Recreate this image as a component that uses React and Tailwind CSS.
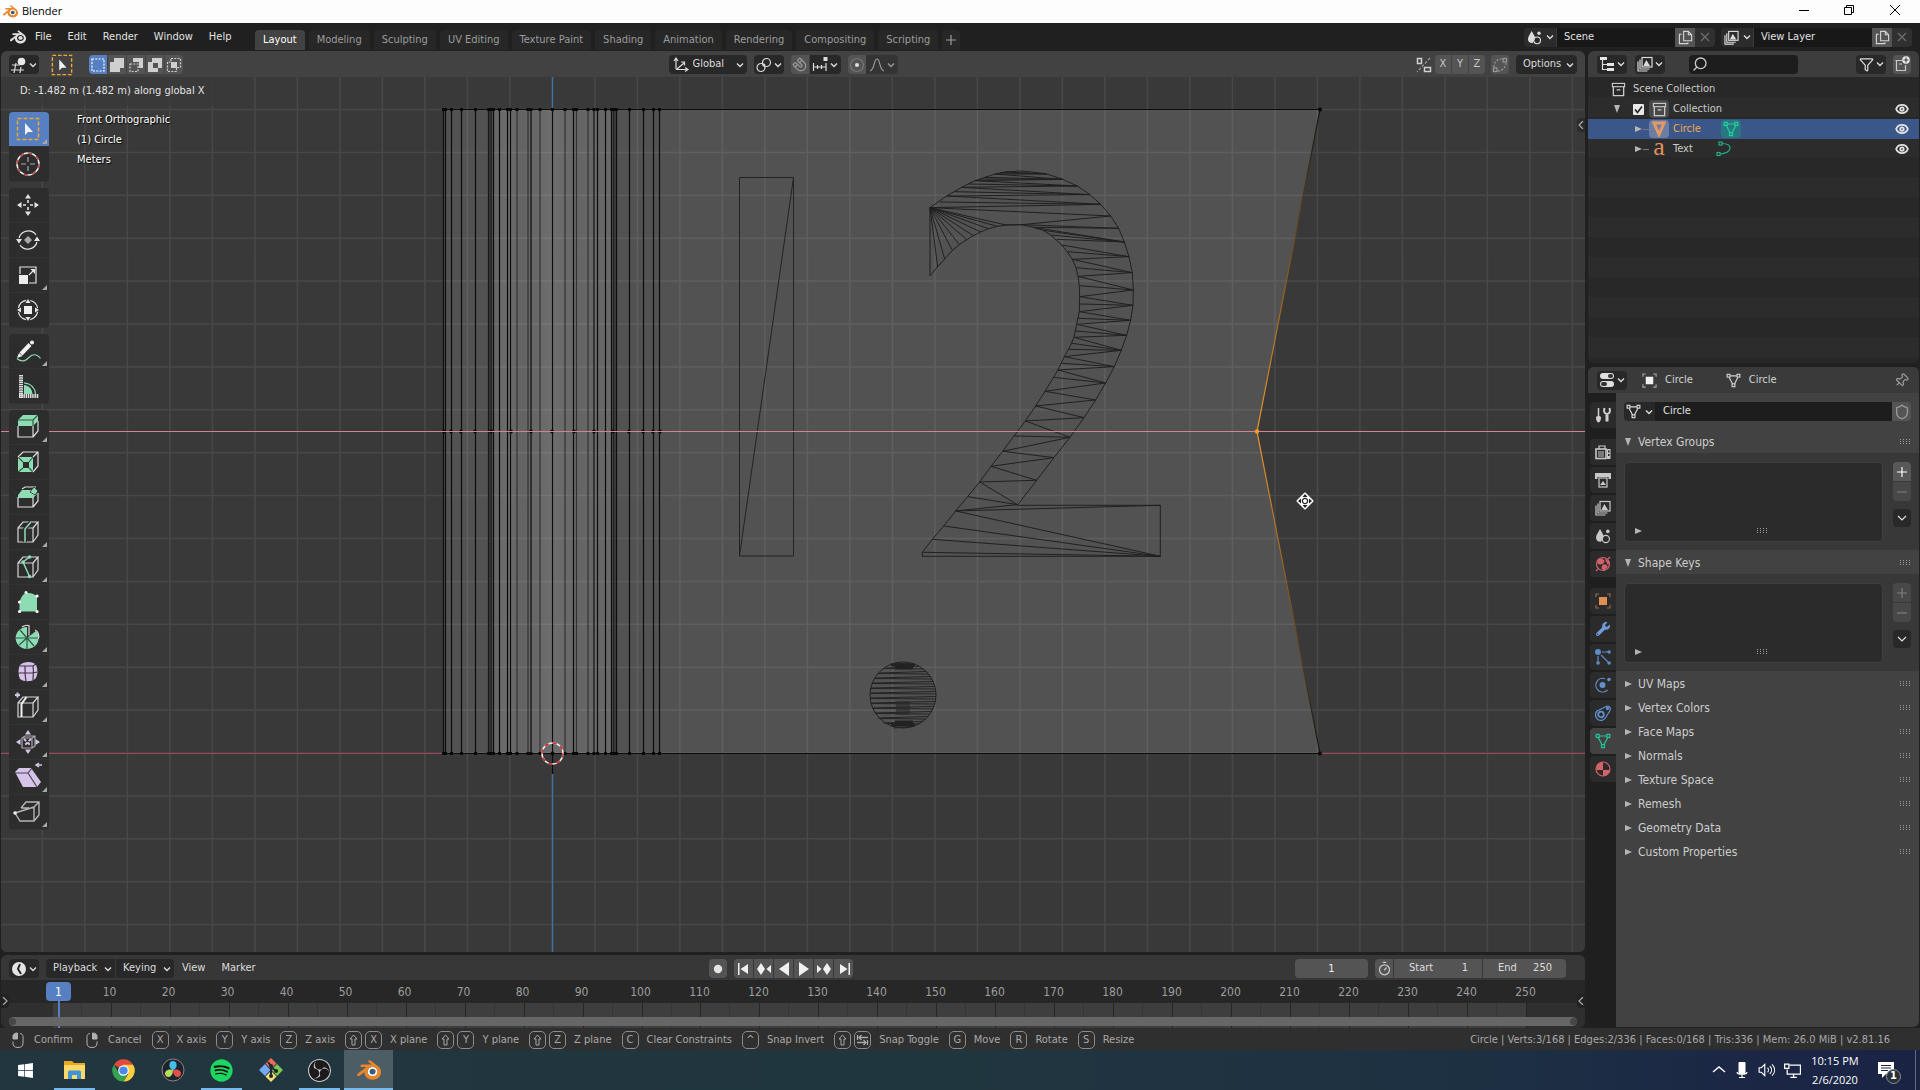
import React, { useState } from 'react';
import clsx from 'clsx';
import { Search, Pin, Shield, Funnel, Eye, Magnet, Timer } from 'lucide-react';
import { FaWrench, FaSpotify, FaWindows } from 'react-icons/fa';
import { SiBlender, SiObsstudio } from 'react-icons/si';

/* ---------- icons ---------- */

const Ico = ({ size = 16, box = 16, className, children }) => (
  <svg
    width={size}
    height={size}
    viewBox={`0 0 ${box} ${box}`}
    fill="none"
    stroke="currentColor"
    strokeWidth="1.2"
    className={clsx('shrink-0', className)}
    aria-hidden="true"
  >
    {children}
  </svg>
);

const Caret = ({ className }) => (
  <Ico size={8} box={8} className={className}>
    <path d="M1 2.5l3 3 3-3" strokeWidth="1.4" />
  </Ico>
);

const MeshIcon = (props) => (
  <Ico {...props}>
    <path d="M4.5 3h7M3.4 4.8l3.6 7M12.6 4.8l-3.6 7" />
    <rect x="1.2" y="1.4" width="3" height="3" />
    <rect x="11.8" y="1.4" width="3" height="3" />
    <rect x="6.5" y="11.6" width="3" height="3" />
  </Ico>
);

const ObjectIcon = (props) => (
  <Ico {...props}>
    <rect x="4" y="4" width="8" height="8" fill="currentColor" stroke="none" />
    <path d="M1 4V1h3M12 1h3v3M15 12v3h-3M4 15H1v-3" opacity="0.6" />
  </Ico>
);

const SceneIcon = (props) => (
  <Ico {...props}>
    <path d="M5 1c1.5 3 3.5 5 3.5 7.5 0 1-.3 1.6-.8 2.2L6 13.8C3 14 1 12.3 1 9.5 1 7 3.5 4 5 1z" fill="currentColor" stroke="none" />
    <circle cx="10.8" cy="11" r="3.6" />
    <circle cx="12.8" cy="3.4" r="1.8" fill="currentColor" stroke="none" />
  </Ico>
);

const LayersIcon = (props) => (
  <Ico {...props}>
    <path d="M1 5.5v9.5h9.5M3 3.5V13h9.5" />
    <rect x="5" y="1.5" width="10" height="9.5" />
    <path d="M6.3 10l3-6 3.8 6z" fill="currentColor" stroke="none" />
  </Ico>
);

const CollectionIcon = (props) => (
  <Ico {...props}>
    <rect x="1.5" y="1.5" width="13" height="3.5" />
    <path d="M2.5 5v9.500h11V5M6 8.300h4" strokeWidth="1.4" />
  </Ico>
);

const CopyIcon = (props) => (
  <Ico {...props}>
    <path d="M6 1.5h5l3.5 3.500v6.500H6zM11 1.500V5h3.500" />
    <path d="M4 4.500H1.500v10h9V13" />
  </Ico>
);

const SnapIncrement = () => (
  <Ico>
    <path d="M1.500 6v8M14 6v8M1.500 10h12.500M5.500 8v4M9.500 8v4" />
    <rect x="11.5" y="0" width="4" height="4" fill="currentColor" stroke="none" />
  </Ico>
);

const BlenderColor = ({ size }) => (
  <svg width={size} height={size} viewBox="0 0 24 24" aria-hidden="true">
    <circle cx="15.6" cy="14" r="5" fill="#fff" />
    <SiBlender size={24} color="#e8862a" />
    <circle cx="15.4" cy="13.7" r="2.7" fill="#255d96" />
  </svg>
);

/* ---------- toolbar icons, drawn on a 24 grid ---------- */

const MINT = '#8edcb4';
const LILAC = '#d5c3e8';

const Tool = ({ children }) => (
  <Ico size={24} box={24}>{children}</Ico>
);

const Cube = ({ color = '#d6d6d6' }) => (
  <path d="M2 8h15v14H2zM2 8l5-6h15l-5 6M22 2v13l-5 7" stroke={color} />
);

const SelectBox = ({ size = 24 }) => (
  <Ico size={size} box={24}>
    <rect x="1.5" y="1.5" width="21" height="21" stroke="#f0a733" strokeWidth="1.5" strokeDasharray="4 2" />
    <path d="M9 6v12l3-3h5z" fill="#f2f2f2" stroke="none" />
  </Ico>
);

const TOOL_GROUPS = [
  [
    { name: 'Select Box', more: true, icon: <SelectBox /> },
    {
      name: 'Cursor',
      icon: (
        <Tool>
          <circle cx="12" cy="12" r="11" stroke="#ededed" strokeWidth="1.5" />
          <circle cx="12" cy="12" r="11" stroke="#b5474a" strokeWidth="1.5" strokeDasharray="4.3 4.3" />
          <path d="M12 5v5M12 14v5M5 12h5M14 12h5" stroke="#aaa" />
        </Tool>
      ),
    },
  ],
  [
    {
      name: 'Move',
      icon: (
        <Tool>
          <path d="M12 7v3M12 14v3M7 12h3M14 12h3" strokeWidth="1.6" />
          <path d="M12 1l3 4.500H9zM12 23l3-4.500H9zM1 12l4.500-3v6zM23 12l-4.500-3v6z" fill="currentColor" stroke="none" />
        </Tool>
      ),
    },
    {
      name: 'Rotate',
      icon: (
        <Tool>
          <path d="M3 10A9.600 9.600 0 0 1 20 6.800M21 14A9.600 9.600 0 0 1 4 17.200" />
          <path d="M0 11h6l-3 4.500zM18 13h6l-3-4.500z" fill="currentColor" stroke="none" />
          <path d="M12 8l4 4-4 4-4-4z" fill="#aaa" stroke="none" />
        </Tool>
      ),
    },
    {
      name: 'Scale',
      more: true,
      icon: (
        <Tool>
          <path d="M4 11V4h16v16h-7M13 12l4-4" />
          <path d="M19 6v5l-4.500-5z" fill="currentColor" stroke="none" />
          <rect x="3" y="12" width="9" height="9" fill="#ececec" stroke="none" />
        </Tool>
      ),
    },
    {
      name: 'Transform',
      icon: (
        <Tool>
          <circle cx="12" cy="12" r="9.8" strokeDasharray="11 4.4" strokeDashoffset="-2" />
          <rect x="8" y="8" width="8" height="8" fill="#f0f0f0" stroke="none" />
          <path d="M12 1l2.500 4h-5zM12 23l2.500-4h-5zM1 12l4-2.500v5zM23 12l-4-2.500v5z" fill="currentColor" stroke="none" />
        </Tool>
      ),
    },
  ],
  [
    {
      name: 'Annotate',
      more: true,
      icon: (
        <Tool>
          <path d="M5 15L14 5.500" stroke="#f0f0f0" strokeWidth="4" />
          <path d="M1 19l2-5 3.500 3z" fill="#f0f0f0" stroke="none" />
          <circle cx="16" cy="3.500" r="2" fill="#f0f0f0" stroke="none" />
          <path d="M1 19.500c6 5 10 1 12.500-1.500s7-4 11 1.500" stroke={MINT} />
        </Tool>
      ),
    },
    {
      name: 'Measure',
      icon: (
        <Tool>
          <path d="M5 1v23M3 22h20" stroke="#ddd" strokeWidth="4" strokeDasharray="1.5 .7" />
          <path d="M8 9c7 .5 11 5 11.500 11" stroke={MINT} />
          <path d="M8 11c5 .5 8 4 8.500 9H8z" fill={MINT} stroke="none" />
        </Tool>
      ),
    },
  ],
  [
    {
      name: 'Extrude Region',
      more: true,
      icon: (
        <Tool>
          <path d="M2 5l5-5h15v6l-5 5H2z" fill={MINT} stroke="none" />
          <path d="M2 11v11h15V11M22 6v10l-5 6" stroke="#ddd" />
          <path d="M2 5h15l5-5M17 5v6" stroke="#2f5a45" />
        </Tool>
      ),
    },
    {
      name: 'Inset Faces',
      icon: (
        <Tool>
          <path d="M2 7h15v15H2z" fill={MINT} stroke="none" />
          <path d="M7 12h6v6H7z" fill="#2d2d2d" stroke="none" />
          <path d="M2 7l5 5M17 7l-4 5M2 22l5-4M17 22l-4-4" stroke="#2d5a44" />
          <path d="M2 7l5-5h15v14l-5 6M17 7l5-5" stroke="#ddd" />
        </Tool>
      ),
    },
    {
      name: 'Bevel',
      icon: (
        <Tool>
          <path d="M2 10l4-5h10l5 4-4 4H2z" fill={MINT} stroke="none" />
          <path d="M6 4l3-2h11M2 12v10h15V12M22 8v8l-5 6" stroke="#ddd" />
          <path d="M18 2l4 4-3 4-5-3z" fill={MINT} stroke="#2d2d2d" strokeWidth=".8" />
        </Tool>
      ),
    },
    {
      name: 'Loop Cut',
      more: true,
      icon: (
        <Tool>
          <Cube />
          <path d="M9 22V9l6-7" stroke="#2d2d2d" strokeWidth="4" />
          <path d="M9 22V9l6-7" stroke={MINT} strokeWidth="1.5" />
        </Tool>
      ),
    },
    {
      name: 'Knife',
      more: true,
      icon: (
        <Tool>
          <Cube />
          <path d="M13.500 21.500L7 7l6.500-5" stroke={MINT} strokeWidth="1.5" />
          <path d="M13.500 21.500h.1M7 7h.1M13.500 2h.1" stroke={MINT} strokeWidth="3.5" strokeLinecap="round" />
        </Tool>
      ),
    },
    {
      name: 'Poly Build',
      icon: (
        <Tool>
          <path d="M3.500 21.500V12C5 7 7 4 10 3c5-.5 9 1 11 4v14.500z" fill={MINT} stroke="none" />
          <path d="M3.500 21.500h.1M3.500 12h.1M10 2.500h.1M21 6h.1M21 21.500h.1" stroke="#f2f2f2" strokeWidth="3.2" strokeLinecap="round" />
        </Tool>
      ),
    },
    {
      name: 'Spin',
      more: true,
      icon: (
        <Tool>
          <path d="M11 13V2a11.500 11 0 1 0 9 4z" fill={MINT} stroke="none" />
          <path d="M6 2c2-1.500 5-2 7-1.500v10M19 5c3 1 5 6 3 9" stroke="#ddd" />
          <path d="M11 13H0M11 13h11M11 13v11M11 13L4 5M11 13l-8 7M11 13l7 8" stroke="#2d5a44" />
        </Tool>
      ),
    },
    {
      name: 'Smooth',
      more: true,
      icon: (
        <Tool>
          <path d="M4 5c4-4 13-4 16 0 2 4 2 11-1 14-4 3-11 3-15 0-2-4-2-10 0-14z" fill={LILAC} stroke="none" />
          <path d="M2 13h15l4-1M9 6c0 6 0 10 1 15M17 6c1 6 0 10 0 14M4 6h13l3-2" stroke="#3d3545" />
        </Tool>
      ),
    },
    {
      name: 'Edge Slide',
      more: true,
      icon: (
        <Tool>
          <Cube />
          <path d="M5.500 22V9l5-7" stroke="#f2f2f2" strokeWidth="2" />
          <path d="M1.500-2.500v5M-1 0h5" stroke={LILAC} strokeWidth="2" />
        </Tool>
      ),
    },
    {
      name: 'Shrink/Fatten',
      more: true,
      icon: (
        <Tool>
          <path d="M6 8h10v10H6zM6 8l3-2h10v10l-3 2M16 8l3-2" stroke="#aaa" />
          <path d="M8 9l7 7M15 9l-7 7" stroke={LILAC} strokeDasharray="3 2" strokeWidth="2" />
          <path d="M12 0l3 4.500H9zM12 24l3-4.500H9zM0 12l4.500-3v6zM24 12l-4.500-3v6z" fill={LILAC} stroke="none" />
        </Tool>
      ),
    },
    {
      name: 'Shear',
      more: true,
      icon: (
        <Tool>
          <path d="M-1 7l4-4h12l10 14-4 5H7z" fill={LILAC} stroke="none" />
          <path d="M-1 8h13l9 14M12 8l4-5" stroke="#4a4255" />
          <path d="M20 0h6M23-2l-3 2 3 2" stroke={LILAC} strokeWidth="1.5" />
        </Tool>
      ),
    },
    {
      name: 'Rip Region',
      more: true,
      icon: (
        <Tool>
          <path d="M5 8l5-6h13v13l-5 6H4l-5-8 19-6v14M18 7l5-5M5 8h8" stroke="#b5b5b5" strokeWidth="1.4" />
          <path d="M-1 13h.1" stroke="#eee" strokeWidth="3.5" strokeLinecap="round" />
        </Tool>
      ),
    },
  ],
];

/* ---------- small widgets ---------- */

const menuBtn = 'flex h-[19px] items-center rounded bg-[#282828] text-[#dcdcdc]';
const toolBtn = 'flex h-[19px] items-center justify-center bg-[#545454] text-[#c8c8c8]';

const EditorButton = ({ label, children }) => (
  <button aria-label={label} className={`${menuBtn} w-[30px] justify-center gap-0.5`}>
    {children}
    <Caret />
  </button>
);

function DataField({ label, icon, value }) {
  return (
    <div className="flex h-[19px] w-[191px] overflow-hidden rounded">
      <button aria-label={`Browse ${label}`} className="flex w-8 items-center justify-center gap-1 bg-[#2c2c2c] text-[#dcdcdc]">
        {icon}
        <Caret />
      </button>
      <input aria-label={label} defaultValue={value} className="w-0 flex-1 border-l border-[#3a3a3a] bg-[#181818] px-[7px] text-[#e0e0e0] outline-none" />
      <button aria-label={`New ${label}`} className="flex w-5 items-center justify-center bg-[#545454] text-[#d5d5d5]">
        <CopyIcon size={15} />
      </button>
      <button aria-label={`Remove ${label}`} className="flex w-5 items-center justify-center bg-[#303030] text-[#6e6e6e]">
        <Ico size={10} box={10}><path d="M1 1l8 8M9 1L1 9" /></Ico>
      </button>
    </div>
  );
}

/* ---------- window chrome ---------- */

const TitleBar = () => (
  <div className="flex h-[23px] shrink-0 items-center bg-[#fdfdfd] pl-[3px] text-black">
    <BlenderColor size={15} />
    <h1 className="ml-1 flex-1 font-['Open_Sans','Noto_Sans',sans-serif] text-[11px]">Blender</h1>
    <button aria-label="Minimize" className="flex w-[45px] justify-center pb-1">
      <Ico size={10} box={10}><path d="M0 5.500h10" strokeWidth="1" /></Ico>
    </button>
    <button aria-label="Restore" className="flex w-[46px] justify-center pb-1">
      <Ico size={10} box={10}><path d="M.5 2.500h7v7h-7zM2.500 2.500v-2h7v7h-2" strokeWidth="1" /></Ico>
    </button>
    <button aria-label="Close" className="mr-[3px] flex w-[45px] justify-center pb-1">
      <Ico size={10} box={10}><path d="M0 0l10 10M10 0L0 10" strokeWidth="1" /></Ico>
    </button>
  </div>
);

const WORKSPACES = [
  'Layout', 'Modeling', 'Sculpting', 'UV Editing', 'Texture Paint',
  'Shading', 'Animation', 'Rendering', 'Compositing', 'Scripting',
];

function TopBar() {
  const [active, setActive] = useState('Layout');

  return (
    <header className="flex h-7 shrink-0 items-center bg-[#202020] pr-2 pl-2.5">
      <SiBlender size={16} color="#e0e0e0" className="shrink-0" />
      <nav className="ml-[9px] flex w-[220px] shrink-0 gap-4 text-[#e2e2e2]">
        {['File', 'Edit', 'Render', 'Window', 'Help'].map((m) => (
          <button key={m}>{m}</button>
        ))}
      </nav>
      <div className="flex flex-1 gap-1 self-end pb-px">
        {WORKSPACES.map((w) => (
          <button
            key={w}
            onClick={() => setActive(w)}
            className={clsx(
              'h-5 rounded-t px-2 whitespace-nowrap',
              w === active ? 'bg-[#424242] text-white' : 'bg-[#272727] text-[#9c9c9c]',
            )}
          >
            {w}
          </button>
        ))}
        <button aria-label="Add workspace" className="flex h-5 w-[18px] items-center justify-center rounded-t bg-[#272727] text-[#9c9c9c]">
          <Ico size={10} box={10}><path d="M5 0v10M0 5h10" /></Ico>
        </button>
      </div>
      <div className="flex gap-1.5">
        <DataField label="Scene" value="Scene" icon={<SceneIcon size={15} />} />
        <DataField label="View Layer" value="View Layer" icon={<LayersIcon size={15} />} />
      </div>
    </header>
  );
}

/* ---------- 3D viewport ---------- */

const SELECT_MODES = [
  { name: 'New selection', icon: <rect x="2" y="2" width="12" height="12" strokeDasharray="2 1.3" /> },
  { name: 'Extend', icon: <path d="M5 1h10v10h-4v4H1V5h4z" fill="currentColor" stroke="none" /> },
  { name: 'Subtract', icon: <><path d="M5 1h10v10h-4V5H5z" fill="currentColor" stroke="none" /><path d="M2 7h8v7.500H2z" strokeDasharray="2 1.3" /></> },
  { name: 'Difference', icon: <path d="M5 1h10v10h-4v4H1V5h4zM6 6v5h5V6z" fillRule="evenodd" fill="currentColor" stroke="none" /> },
  { name: 'Intersect', icon: <><rect x="5" y="5" width="6" height="6" fill="currentColor" stroke="none" /><path d="M5 1.500h9.500v9h-4v4h-9V5H5z" strokeDasharray="2 1.3" /></> },
];

function ViewportHeader() {
  return (
    <div className="flex h-[26px] shrink-0 items-center rounded-t-md bg-[#424242] pt-px pr-2 pl-2">
      <div className="flex flex-1 items-center">
        <EditorButton label="Editor type">
          <Ico>
            <path d="M1 8h8M0 13h13M5 6L3 16M10 10l-1 6" />
            <circle cx="10.5" cy="4.5" r="3.8" fill="#e8e8e8" stroke="none" />
          </Ico>
        </EditorButton>
        <span className="ml-3"><SelectBox size={22} /></span>
        <div className="ml-4 flex gap-px overflow-hidden rounded">
          {SELECT_MODES.map((m, i) => (
            <button
              key={m.name}
              aria-label={m.name}
              className={clsx('flex h-[19px] w-[18px] items-center justify-center', i === 0 ? 'bg-[#5680c2] text-white' : 'bg-[#545454] text-[#cfcfcf]')}
            >
              <Ico>{m.icon}</Ico>
            </button>
          ))}
        </div>
      </div>

      <div className="mr-5 flex items-center gap-[7px]">
        <label className={`${menuBtn} relative w-[78px] pl-1`}>
          <Ico>
            <path d="M3 12V2M1 4l2-3 2 3M3 12.500h11M12 10.500l3 2-3 2M4 12l7-6M8 5h3.500v3.500" />
          </Ico>
          <select aria-label="Transform orientation" className="absolute inset-0 appearance-none bg-transparent pl-6 outline-none">
            <option>Global</option>
          </select>
          <Caret className="absolute right-[3px]" />
        </label>
        <EditorButton label="Pivot point">
          <Ico>
            <circle cx="5" cy="10.5" r="4" />
            <circle cx="10.5" cy="5.5" r="4" />
            <circle cx="7.8" cy="8" r="1.5" fill="currentColor" stroke="none" />
          </Ico>
        </EditorButton>
        <div className="flex gap-px overflow-hidden rounded">
          <button aria-label="Snap" className={`${toolBtn} w-[18px]`}>
            <Magnet size={15} strokeWidth={2} className="rotate-90 text-[#999]" />
          </button>
          <button aria-label="Snapping" className="flex h-[19px] w-[31px] items-center justify-center gap-0.5 bg-[#282828] text-[#dcdcdc]">
            <SnapIncrement />
            <Caret />
          </button>
        </div>
        <div className="flex overflow-hidden rounded">
          <button aria-label="Proportional editing" className={`${toolBtn} w-[18px]`}>
            <Ico>
              <circle cx="8" cy="8" r="6.5" stroke="#777" />
              <circle cx="8" cy="8" r="2" fill="#e0e0e0" stroke="none" />
            </Ico>
          </button>
          <button aria-label="Proportional falloff" className="flex h-[19px] w-8 items-center justify-center gap-0.5 bg-[#343434] text-[#999]">
            <Ico><path d="M1 14c5-1 3.500-12 7-12s2 11 7 12" /></Ico>
            <Caret />
          </button>
        </div>
      </div>

      <div className="flex flex-1 items-center justify-end">
        <Ico className="mr-[3px] text-[#d0d0d0]">
          <rect x="1.5" y="1.5" width="4" height="5" strokeWidth="1.5" />
          <rect x="8.5" y="10.5" width="6" height="4" strokeWidth="1.5" />
          <path d="M14 1L1 15" strokeDasharray="3 1.5" stroke="#999" />
        </Ico>
        <div className="mr-1.5 flex gap-px overflow-hidden rounded">
          {['X', 'Y', 'Z'].map((axis) => (
            <button key={axis} className={`${toolBtn} w-4`}>{axis}</button>
          ))}
        </div>
        <button aria-label="Topology mirror" className={`${toolBtn} mr-[7px] w-[18px] rounded`}>
          <Ico className="text-[#999]">
            <path d="M2 10C2 5 5 2 10 2M6 14c4 0 8-4 8-8" strokeDasharray="2 1.5" />
            <rect x="1.5" y="11" width="3.5" height="3.5" />
            <rect x="11" y="1.5" width="3.5" height="3.5" />
          </Ico>
        </button>
        <button className={`${menuBtn} w-[61px] justify-between pr-[3px] pl-[7px]`}>
          Options
          <Caret />
        </button>
      </div>
    </div>
  );
}

// vertical edges of the cylinder: [x, dim]
const EDGES = [
  [443.5], [445.5], [451.5], [461.5], [475.5], [488.5], [491], [493.5], [499.5],
  [507.5], [510.5], [517, 1], [528, 1], [531], [540, 1], [552.5], [565, 1], [573.5], [576.5, 1],
  [588, 1], [594], [597.5], [605.5], [611.5], [613.5], [616.5], [629.5], [643.5], [653.5], [659.5],
];
const MID_VERTS = [444, 451, 461, 475, 491, 511, 531, 552, 574, 594, 613, 629, 643, 653, 660];

const TWO_OUTLINE =
  'M150 203V408L173 380 194 357 217 331 238 314 260 299 280 287 302 276 325 266 352 259 378 255 425 254 460 262 490 271 512 285 545 315 562 335 577 358 588 383 594 409 598 437 599 470 598 515 590 553 582 592 570 620 553 650 534 690 495 754 467 798 436 843 402 888 368 934 333 979 299 1026 263 1070 227 1113 191 1158 157 1198 127 1237V1249H841V1096H412L470 1021 522 953 570 892 612 833 647 780 677 729 703 680 724 631 740 586 752 541 759 496 760 450 757 398 747 350 733 306 716 265 692 228 662 193 630 164 592 138 548 118 500 102 455 96 420 93 375 96 345 102 315 112 285 122 245 142 200 168Z';

// triangulation fans: every edge runs from the first point to each of the others
const TWO_FANS = [
  [150, 203, 173, 380, 194, 357, 217, 331, 238, 314, 260, 299, 280, 287, 302, 276, 325, 266, 352, 259, 378, 255, 662, 193, 692, 228],
  [662, 193, 180, 186, 200, 168],
  [630, 164, 200, 168, 222, 155, 245, 142],
  [592, 138, 245, 142, 265, 132, 285, 122],
  [548, 118, 285, 122, 300, 117, 315, 112, 345, 102],
  [500, 102, 345, 102, 360, 98, 375, 96],
  [425, 254, 378, 255, 692, 228, 716, 265],
  [716, 265, 460, 262],
  [733, 306, 460, 262, 490, 271, 512, 285, 530, 298],
  [747, 350, 545, 315, 562, 335, 577, 358],
  [757, 398, 577, 358, 588, 383, 594, 409],
  [760, 450, 594, 409, 598, 437, 599, 470],
  [759, 496, 599, 470, 598, 492, 598, 515],
  [752, 541, 598, 515, 594, 535, 590, 553],
  [740, 586, 590, 553, 586, 573, 582, 592],
  [724, 631, 582, 592, 576, 610, 566, 628, 553, 650],
  [703, 680, 553, 650, 545, 670, 534, 690],
  [677, 729, 534, 690, 520, 712, 495, 754],
  [647, 780, 495, 754, 467, 798],
  [612, 833, 467, 798, 436, 843],
  [570, 892, 436, 843, 402, 888, 368, 934],
  [522, 953, 368, 934, 333, 979],
  [470, 1021, 333, 979, 299, 1026],
  [412, 1094, 299, 1026, 263, 1070, 227, 1113],
  [227, 1113, 841, 1096],
  [841, 1249, 227, 1113, 191, 1158, 157, 1198, 127, 1237],
];

const fanPath = ([x, y, ...rest]) => {
  let d = '';
  for (let i = 0; i < rest.length; i += 2) d += `M${x} ${y}L${rest[i]} ${rest[i + 1]}`;
  return d;
};

function Scene3D() {
  const cols = Array.from({ length: 38 }, (_, i) => 42.4 + i * 42.5);
  const rows = Array.from({ length: 20 }, (_, i) => 109.5 + i * 42.9);
  const grid = [
    ...cols.map((x) => `M${x} 77V952`),
    ...rows.map((y) => `M0 ${y}H1585`),
  ].join('');

  return (
    <svg
      className="absolute inset-0 h-full w-full"
      viewBox="1 77 1584 875"
      preserveAspectRatio="xMidYMid slice"
      fill="none"
      aria-hidden="true"
    >
      <defs>
        <linearGradient id="tube" x1="0" x2="1">
          <stop offset="0" stopColor="#636363" />
          <stop offset="0.1" stopColor="#6b6b6b" />
          <stop offset="0.25" stopColor="#636363" />
          <stop offset="0.5" stopColor="#6d6d6d" />
          <stop offset="0.75" stopColor="#656565" />
          <stop offset="1" stopColor="#686868" />
        </linearGradient>
        <linearGradient id="edgeUp" x1="0" y1="1" x2="0" y2="0">
          <stop offset="0" stopColor="#f39a2b" />
          <stop offset="0.5" stopColor="#85571f" />
          <stop offset="1" stopColor="#111" />
        </linearGradient>
        <linearGradient id="edgeDown" x1="0" y1="0" x2="0" y2="1">
          <stop offset="0" stopColor="#f39a2b" />
          <stop offset="0.5" stopColor="#85571f" />
          <stop offset="1" stopColor="#111" />
        </linearGradient>
      </defs>

      <rect y="77" width="1585" height="875" fill="#393939" />
      <path d="M443.500 109.500H1320L1257 431.500 1320 753H443.500z" fill="#525252" />
      <rect x="493" y="109.5" width="118" height="643.5" fill="url(#tube)" />
      <path d={grid} stroke="#fff" strokeOpacity="0.08" strokeWidth="1.5" />

      {/* world axes */}
      <path d="M0 753.500H1585" stroke="#a04650" strokeWidth="1.2" />
      <path d="M552.500 77V109M552.500 774V952" stroke="#3f71a5" strokeWidth="1.4" />

      {/* mesh wire */}
      {EDGES.map(([x, dim]) => (
        <path key={x} d={`M${x} 109.500V753`} stroke={dim ? '#333' : '#0c0c0c'} strokeWidth="1.2" />
      ))}
      <path d="M490 110V753M614.500 110V753" stroke="#2e2e2e" strokeWidth="3" strokeOpacity="0.6" />
      <path d="M443 109.500H1320M443 753.500H1320M552.500 753V774" stroke="#0a0a0a" strokeWidth="1.2" />
      <path d="M1257 431.500L1320 109.500" stroke="url(#edgeUp)" strokeWidth="1.2" />
      <path d="M1257 431.500L1320 753.500" stroke="url(#edgeDown)" strokeWidth="1.2" />
      {EDGES.map(([x]) => (
        <path key={x} d={`M${x - 1.5} 109.500h3M${x - 1.5} 753.500h3`} stroke="#080808" strokeWidth="3" />
      ))}
      {MID_VERTS.map((x) => (
        <path key={x} d={`M${x - 1.5} 431.500h3`} stroke="#080808" strokeWidth="3.5" />
      ))}
      <circle cx="1320" cy="109.5" r="2" fill="#080808" />
      <circle cx="1320" cy="753.5" r="2" fill="#080808" />

      {/* text object: 1 */}
      <path d="M739.500 177.500H793.500V556H739.500ZL793.500 177.500" stroke="#232323" />
      <path d="M739.500 556L793.500 177.500" stroke="#232323" />

      {/* text object: 2 */}
      <g transform="translate(880 140) scale(.3333)" stroke="#202020" strokeWidth="3">
        <path d={TWO_OUTLINE} />
        {TWO_FANS.map((f) => (
          <path key={f.slice(0, 4).join()} d={fanPath(f)} />
        ))}
      </g>

      {/* text object: dot */}
      <circle cx="903" cy="695" r="33" stroke="#202020" />
      {Array.from({ length: 26 }, (_, i) => {
        const y = 664 + i * 2.5;
        const half = Math.sqrt(Math.max(0, 33 * 33 - (y - 695) ** 2));
        const skew = i % 2 ? 1.5 : -0.5;
        return <path key={y} d={`M${903 - half} ${y + skew}L${903 + half} ${y}`} stroke="#232323" />;
      })}
      <path d="M891 665h24M895 668h18M891 725h24M895 722h18" stroke="#222" strokeWidth="3" />
      <path d="M896 701h14v14h-14z" fill="#2a2a2a" fillOpacity="0.6" />

      {/* constraint axis */}
      <path d="M0 431.500H1585" stroke="#d0868d" strokeWidth="1.2" />
      <circle cx="1257" cy="431.5" r="2.2" fill="#ff9a2e" />

      {/* 3D cursor */}
      <circle cx="552.5" cy="753.5" r="10.5" stroke="#eee" strokeWidth="1.5" />
      <circle cx="552.5" cy="753.5" r="10.5" stroke="#d3262b" strokeWidth="1.5" strokeDasharray="4.1 4.1" />
      <circle cx="552.5" cy="753.5" r="2" fill="#080808" />

      {/* mouse pointer */}
      <g transform="translate(1305 501)">
        <path d="M0-7.500L7.500 0 0 7.500-7.500 0z" fill="#fff" stroke="#fff" strokeWidth="2" strokeLinejoin="round" />
        <path d="M0-7l2.500 3h-5zM0 7l2.500-3h-5zM-7 0l3-2.500v5zM7 0l-3-2.500v5z" fill="#222" />
        <circle r="2.6" stroke="#222" strokeWidth="1.3" />
      </g>
    </svg>
  );
}

function Toolbar() {
  const [tool, setTool] = useState('Select Box');

  return (
    <div className="absolute top-[35px] left-2 flex w-10 flex-col gap-1.5">
      {TOOL_GROUPS.map((group) => (
        <div key={group[0].name} className="overflow-hidden rounded bg-[#2d2d2d]">
          {group.map((item) => (
            <button
              key={item.name}
              aria-label={item.name}
              onClick={() => setTool(item.name)}
              className={clsx(
                'relative flex h-[35px] w-full items-center justify-center border-b border-[#333] pr-0.5 text-[#e4e4e4]',
                tool === item.name && 'bg-[#5680c2]',
              )}
            >
              <span className="[&>svg]:overflow-visible">{item.icon}</span>
              {item.more && (
                <svg width="5" height="5" className="absolute right-0.5 bottom-0.5" aria-hidden="true">
                  <path d="M5 0v5H0z" fill="#a8a8a8" />
                </svg>
              )}
            </button>
          ))}
        </div>
      ))}
    </div>
  );
}

function Viewport() {
  return (
    <section className="flex min-h-0 flex-1 flex-col">
      <ViewportHeader />
      <div className="relative flex-1 overflow-hidden rounded-b-md bg-[#393939]">
        <Scene3D />
        <div className="absolute top-0 left-0 flex h-[29px] w-[227px] items-center bg-[#3a3a3a]/80 pl-[19px] text-[#e2e2e2]">
          D: -1.482 m (1.482 m) along global X
        </div>
        <div className="absolute top-[33px] left-[76px] leading-5 text-white [text-shadow:1px_1px_1px_#000]">
          <p>Front Orthographic</p>
          <p>(1) Circle</p>
          <p>Meters</p>
        </div>
        <Toolbar />
        <button aria-label="Show sidebar" className="absolute top-[41px] right-0 flex h-3.5 w-2 items-center justify-center rounded-l bg-[#2b2b2b] text-[#aaa]">
          <Ico size={8} box={8}><path d="M6 0L2 4l4 4" /></Ico>
        </button>
      </div>
    </section>
  );
}

/* ---------- timeline ---------- */

const TRANSPORT = [
  { name: 'Jump to start', d: 'M2 2h1.500v12H2zM12 3v10L4.500 8z' },
  { name: 'Previous keyframe', d: 'M5 2l4 6-4 6-4-6zM15 4v8l-4.500-4z' },
  { name: 'Play reverse', d: 'M13 1v14L3 8z' },
  { name: 'Play', d: 'M3 1v14l10-7z' },
  { name: 'Next keyframe', d: 'M11 2l4 6-4 6-4-6zM1 4v8l4.500-4z' },
  { name: 'Jump to end', d: 'M12.500 2H14v12h-1.500zM4 3v10l7.500-5z' },
];

const FRAMES = Array.from({ length: 25 }, (_, i) => (i + 1) * 10);

function Timeline() {
  return (
    <section className="relative shrink-0 overflow-hidden rounded-md">
      <div className="flex h-[25px] items-center bg-[#373737] pt-0.5 pr-[19px] pl-2 text-[#dcdcdc]">
        <div className="flex flex-1 items-center">
          <EditorButton label="Editor type">
            <Ico>
              <circle cx="8" cy="8" r="7" fill="#e4e4e4" stroke="none" />
              <path d="M9 3L7 8l3 5" stroke="#282828" strokeWidth="2" />
            </Ico>
          </EditorButton>
          <div className="ml-[7px] flex overflow-hidden rounded">
            <button className="flex h-[19px] w-[69px] items-center justify-between bg-[#282828] pr-[3px] pl-[7px]">Playback<Caret /></button>
            <button className="flex h-[19px] w-[59px] items-center justify-between border-l border-[#3a3a3a] bg-[#282828] pr-[3px] pl-[7px]">Keying<Caret /></button>
          </div>
          <button className="ml-2">View</button>
          <button className="ml-4">Marker</button>
        </div>
        <div className="mr-[13px] flex items-center gap-[7px]">
          <button aria-label="Auto keying" className={`${toolBtn} w-[18px] rounded`}>
            <Ico><circle cx="8" cy="8" r="4.2" fill="#e4e4e4" stroke="none" /></Ico>
          </button>
          <div className="flex gap-px overflow-hidden rounded">
            {TRANSPORT.map((b) => (
              <button key={b.name} aria-label={b.name} className={`${toolBtn} w-[19px]`}>
                <Ico><path d={b.d} fill="#f0f0f0" stroke="none" /></Ico>
              </button>
            ))}
          </div>
        </div>
        <div className="flex flex-1 items-center justify-end gap-[7px]">
          <input aria-label="Current frame" defaultValue="1" className="h-[19px] w-[73px] rounded bg-[#545454] text-center text-[#f0f0f0] outline-none" />
          <div className="flex h-[19px] gap-px overflow-hidden rounded">
            <button aria-label="Use preview range" className={`${toolBtn} w-[18px]`}><Timer size={15} strokeWidth={2} /></button>
            <label className="flex w-[88px] items-center justify-between bg-[#545454] pr-3.5 pl-[15px]">
              Start
              <input defaultValue="1" className="w-8 bg-transparent text-right outline-none" />
            </label>
            <label className="flex w-[83px] items-center justify-between bg-[#545454] pr-3.5 pl-[15px]">
              End
              <input defaultValue="250" className="w-8 bg-transparent text-right outline-none" />
            </label>
          </div>
        </div>
      </div>

      <div className="relative">
        <div className="flex h-[23px] items-center bg-[#272727] pr-[30px] pl-[79px] text-center text-[12px] text-[#9e9e9e]">
          {FRAMES.map((f) => (
            <span key={f} className="w-0 flex-1">{f}</span>
          ))}
        </div>
        <div className="relative flex h-[25px] bg-[#2f2f2f] pr-[58px] pl-[52px]">
          {FRAMES.map((f) => (
            <span key={f} className="flex w-0 flex-1 border-r border-[#262626] bg-[#3e3e3e] last:border-black">
              <span className="w-1/2 border-r border-[#353535]" />
            </span>
          ))}
          <div className="absolute inset-x-2 top-3.5 z-10 flex h-[9px] items-center justify-between rounded-full bg-[#666]">
            <span className="size-[7px] rounded-full bg-[#474747]" />
            <span className="size-[7px] rounded-full bg-[#474747]" />
          </div>
        </div>
        <div className="absolute top-0.5 bottom-0 left-[45px] flex w-[25px] flex-col items-center">
          <span className="flex h-[19px] w-full items-center justify-center rounded bg-[#5680c2] text-[12px] text-white">1</span>
          <span className="w-0.5 flex-1 bg-[#5680c2]" />
        </div>
        <button aria-label="Show channels" className="absolute top-3.5 left-0 flex h-3.5 w-2 items-center justify-center rounded-r bg-[#222] text-[#aaa]">
          <Ico size={8} box={8}><path d="M2 0l4 4-4 4" /></Ico>
        </button>
        <button aria-label="Show sidebar" className="absolute top-3.5 right-0 flex h-3.5 w-2 items-center justify-center rounded-l bg-[#222] text-[#aaa]">
          <Ico size={8} box={8}><path d="M6 0L2 4l4 4" /></Ico>
        </button>
      </div>
    </section>
  );
}

/* ---------- outliner ---------- */

const Arrow = ({ open, className }) => (
  <svg width="8" height="8" className={clsx('shrink-0', className)} aria-hidden="true">
    <path d={open ? 'M0 0h6L3 8z' : 'M0 1l7 3-7 3z'} fill="#b5b5b5" />
  </svg>
);

const VisibilityButton = ({ name }) => (
  <button aria-label={`Hide ${name}`} className="mr-2.5 ml-auto text-[#e4e4e4]">
    <Eye size={14} strokeWidth={3} />
  </button>
);

function Outliner() {
  return (
    <section className="flex h-[312px] shrink-0 flex-col overflow-hidden rounded-md bg-[#282828]">
      <div className="flex h-[26px] shrink-0 items-center bg-[#3d3d3d] pr-2 pl-[9px]">
        <EditorButton label="Editor type">
          <Ico>
            <path d="M3.500 4v9.500H8M3.500 8.500H8" />
            <path d="M1 1h7v3H1zM8 7h7v3H8zM8 12h7v3H8z" fill="#e4e4e4" stroke="none" />
          </Ico>
        </EditorButton>
        <span className="ml-2">
          <EditorButton label="Display mode"><LayersIcon /></EditorButton>
        </span>
        <label className="ml-6 flex h-[19px] w-[109px] items-center rounded bg-[#1d1d1d] pl-[3px] text-[#ccc]">
          <Search size={16} strokeWidth={2} className="shrink-0 -scale-x-100" />
          <input aria-label="Filter" className="w-full bg-transparent outline-none" />
        </label>
        <span className="ml-auto">
          <EditorButton label="Filter options"><Funnel size={15} strokeWidth={2} /></EditorButton>
        </span>
        <button aria-label="New collection" className={`${toolBtn} ml-[7px] w-[18px] rounded`}>
          <Ico>
            <path d="M1.500 4.500H8M2.500 4.500v10h9V9M5 8h3" />
            <circle cx="12" cy="4" r="3.8" fill="#eee" stroke="none" />
            <path d="M12 1.500v5M9.500 4h5" stroke="#444" />
          </Ico>
        </button>
      </div>
      <ul className="flex-1 bg-[repeating-linear-gradient(#282828_0_20px,#2c2c2c_20px_40px)] pt-0.5 text-[#cbcbcb]">
        <li className="flex h-5 items-center pl-[23px]">
          <CollectionIcon size={15} />
          <span className="ml-[7px]">Scene Collection</span>
        </li>
        <li className="flex h-5 items-center pl-[26px]">
          <Arrow open />
          <label className="relative ml-[11px] flex size-[11px]">
            <input type="checkbox" defaultChecked aria-label="Collection enabled" className="size-[11px] appearance-none rounded-[1px] bg-[#e8e8e8]" />
            <Ico size={11} box={11} className="absolute text-[#222]"><path d="M2 5.500l2.500 3L9 2.500" strokeWidth="1.6" /></Ico>
          </label>
          <span className="ml-[5px] flex h-[18px] w-5 items-center justify-center rounded bg-[#484848]"><CollectionIcon size={15} /></span>
          <span className="ml-1">Collection</span>
          <VisibilityButton name="Collection" />
        </li>
        <li className="flex h-5 items-center bg-[#3b5689] pl-[47px]">
          <Arrow />
          <span className="h-px w-1.5 bg-[#777]" />
          <span className="flex h-[18px] w-5 items-center justify-center rounded bg-[#6b7da3]">
            <Ico><path d="M3 2h10L8 13.500z" stroke="#e59a66" strokeWidth="3" /></Ico>
          </span>
          <span className="ml-1 text-[#f0a94c]">Circle</span>
          <span className="ml-5 flex h-[18px] w-5 items-center justify-center rounded bg-[#27797f] text-[#25cfa4]"><MeshIcon /></span>
          <VisibilityButton name="Circle" />
        </li>
        <li className="flex h-5 items-center pl-[47px]">
          <Arrow />
          <span className="h-px w-1.5 bg-[#777]" />
          <span className="h-5 w-5 text-center font-['Liberation_Serif',serif] text-[26px] leading-4 text-[#e0905c]">a</span>
          <span className="ml-1">Text</span>
          <Ico className="ml-[23px] text-[#1fae8a]">
            <rect x="1" y="11.5" width="3" height="3" />
            <rect x="3" y="1" width="3" height="3" />
            <path d="M6 2.500c12 0 10 9.500-2 10.500" />
          </Ico>
          <VisibilityButton name="Text" />
        </li>
      </ul>
    </section>
  );
}

/* ---------- properties ---------- */

const TAB_GROUPS = [
  [
    {
      name: 'Tool',
      color: 'text-[#d0d0d0]',
      icon: (
        <Ico>
          <path d="M3.500 1v8" strokeWidth="1.5" />
          <path d="M1 10.500c0-2 5-2 5 0 0 2-1 5-2.500 5S1 12.500 1 10.500z" fill="currentColor" stroke="none" />
          <path d="M12 8v6.500" strokeWidth="3" />
          <path d="M9.500 1c-1 4 0 5.500 2.500 6 2.500-.5 3.500-2 2.500-6" strokeWidth="2" />
        </Ico>
      ),
    },
  ],
  [
    {
      name: 'Render',
      color: 'text-[#c8c8c8]',
      icon: (
        <Ico>
          <rect x="1" y="5" width="10" height="9.5" strokeWidth="1.6" />
          <path d="M4 5V2h6v3M3 8h6M3 10h6M3 12h6" />
          <path d="M12 5h3.500v10H12z" fill="currentColor" stroke="none" />
          <path d="M13 7.500h1.500M13 11h1.500" stroke="#222" strokeWidth="2" />
        </Ico>
      ),
    },
    {
      name: 'Output',
      color: 'text-[#c8c8c8]',
      icon: (
        <Ico>
          <path d="M0 1h16v6h-2.500V5h-11v2H0z" fill="currentColor" stroke="none" />
          <rect x="4" y="6" width="8" height="9" />
          <path d="M5 13l3-4 3 4z" fill="currentColor" stroke="none" />
        </Ico>
      ),
    },
    { name: 'View Layer', color: 'text-[#c8c8c8]', icon: <LayersIcon /> },
    { name: 'Scene', color: 'text-[#c8c8c8]', icon: <SceneIcon /> },
    {
      name: 'World',
      color: 'text-[#d3636b]',
      icon: (
        <Ico>
          <circle cx="8" cy="8" r="6.5" />
          <path d="M3 4l4-1 2 2-1 2-3 1-2-1zM8 9l3 0 1 2-3 3-2-2zM11 4l3 2-1 2z" fill="currentColor" />
          <path d="M13 3l2-2M3 13l-2 2" />
        </Ico>
      ),
    },
  ],
  [
    { name: 'Object', color: 'text-[#dd8f54]', icon: <ObjectIcon /> },
    { name: 'Modifiers', color: 'text-[#6f9bdb]', icon: <FaWrench size={14} /> },
    {
      name: 'Particles',
      color: 'text-[#5f8bc6]',
      icon: (
        <Ico>
          <circle cx="3" cy="3" r="3" fill="currentColor" stroke="none" />
          <path d="M7 3h6M3 7v6M6 6l7 7" />
          <path d="M14 3h.1M3 14h.1M14 14h.1" strokeWidth="3.5" strokeLinecap="round" />
        </Ico>
      ),
    },
    {
      name: 'Physics',
      color: 'text-[#6290cf]',
      icon: (
        <Ico>
          <circle cx="7.5" cy="8" r="3" fill="currentColor" stroke="none" />
          <path d="M10 1.800A6.800 6.800 0 1 0 12.500 13" />
          <circle cx="14" cy="2.5" r="1.8" fill="currentColor" stroke="none" />
        </Ico>
      ),
    },
    {
      name: 'Constraints',
      color: 'text-[#6290cf]',
      icon: (
        <Ico>
          <path d="M2 6L11 1.500c3-1 5 1 4 4L11 12A5.500 5.500 0 1 1 2 6z" />
          <circle cx="6" cy="9.5" r="2.8" strokeWidth="1.8" />
          <circle cx="12.5" cy="3.5" r="1" fill="currentColor" />
        </Ico>
      ),
    },
    { name: 'Object Data', color: 'text-[#20c79a]', icon: <MeshIcon /> },
    {
      name: 'Material',
      color: 'text-[#d3636b]',
      icon: (
        <Ico>
          <circle cx="8" cy="8" r="7" />
          <path d="M8 1v8H1.200A7 7 0 0 1 8 1zM8 9h6.900A7 7 0 0 1 8 15z" fill="currentColor" stroke="none" />
        </Ico>
      ),
    },
  ],
];

const Grip = () => (
  <svg width="11" height="6" aria-hidden="true">
    <path d="M0 .5h11M0 2.500h11M0 4.500h11" stroke="#9c9c9c" strokeDasharray="1 2" />
  </svg>
);

const PanelHeader = ({ title, open }) => (
  <button className="flex h-6 w-full items-center bg-[#424242] pt-px pr-2 pl-[9px] text-[12px] text-[#cdcdcd]">
    <Arrow open={open} />
    <span className="ml-[5px] flex-1 text-left">{title}</span>
    <Grip />
  </button>
);

const ListPanel = ({ title, canAdd }) => (
  <>
    <PanelHeader title={title} open />
    <div className="flex h-[97px] gap-2.5 bg-[#383838] px-2 pt-[9px]">
      <div className="flex h-20 flex-1 items-end rounded border border-[#3f3f3f] bg-[#2b2b2b] px-2.5 pb-1.5">
        <Arrow />
        <span className="mx-auto mb-px pl-2.5"><Grip /></span>
      </div>
      <div className="flex w-[18px] flex-col">
        <button
          aria-label={`Add to ${title}`}
          className={clsx('flex h-[19px] items-center justify-center rounded-t', canAdd ? 'bg-[#585858] text-white' : 'bg-[#484848] text-[#808080]')}
        >
          <Ico size={10} box={10}><path d="M5 0v10M0 5h10" /></Ico>
        </button>
        <button aria-label={`Remove from ${title}`} className="mt-px flex h-[19px] items-center justify-center rounded-b bg-[#484848] text-[#808080]">
          <Ico size={10} box={10}><path d="M0 5h10" /></Ico>
        </button>
        <button aria-label={`${title} specials`} className="mt-2 flex h-[18px] items-center justify-center rounded bg-[#282828] text-[#e0e0e0]">
          <Ico size={10} box={10}><path d="M1 3l4 4 4-4" /></Ico>
        </button>
      </div>
    </div>
  </>
);

const CLOSED_PANELS = [
  'UV Maps', 'Vertex Colors', 'Face Maps', 'Normals',
  'Texture Space', 'Remesh', 'Geometry Data', 'Custom Properties',
];

function Properties() {
  const [tab, setTab] = useState('Object Data');

  return (
    <section className="flex min-h-0 flex-1 flex-col overflow-hidden rounded-md bg-[#424242]">
      <div className="flex h-[26px] shrink-0 items-center bg-[#3a3a3a] pr-2.5 pl-[9px] text-[#d4d4d4]">
        <EditorButton label="Editor type">
          <Ico>
            <rect x="1" y="1" width="14" height="6" rx="3" fill="#dedede" stroke="none" />
            <rect x="1" y="9" width="14" height="6" rx="3" fill="#dedede" stroke="none" />
            <rect x="9" y="2" width="5" height="4" rx="2" fill="#333" stroke="none" />
            <rect x="2" y="10" width="6" height="4" rx="2" fill="#333" stroke="none" />
          </Ico>
        </EditorButton>
        <ObjectIcon size={15} className="ml-[15px] text-[#f2f2f2]" />
        <span className="ml-2">Circle</span>
        <MeshIcon size={15} className="ml-[33px]" />
        <span className="ml-2 flex-1">Circle</span>
        <button aria-label="Pin" className="text-[#999]"><Pin size={15} strokeWidth={2} className="rotate-45" /></button>
      </div>
      <div className="flex min-h-0 flex-1">
        <nav className="flex w-7 shrink-0 flex-col gap-[11px] bg-[#1f1f1f] pt-[9px] pl-0.5">
          {TAB_GROUPS.map((group) => (
            <div key={group[0].name} className="flex flex-col gap-0.5">
              {group.map((t) => (
                <button
                  key={t.name}
                  aria-label={t.name}
                  onClick={() => setTab(t.name)}
                  className={clsx('flex h-[26px] items-center justify-center rounded-l', t.color, tab === t.name ? 'bg-[#424242]' : 'bg-[#2b2b2b]')}
                >
                  {t.icon}
                </button>
              ))}
            </div>
          ))}
        </nav>
        <div className="flex-1">
          <div className="mx-2 mt-[9px] mb-2 flex h-[19px] overflow-hidden rounded">
            <button aria-label="Browse mesh data" className="flex w-[31px] items-center justify-center gap-1 bg-[#282828] text-[#dcdcdc]">
              <MeshIcon size={15} />
              <Caret />
            </button>
            <input aria-label="Mesh name" defaultValue="Circle" className="w-0 flex-1 bg-[#1d1d1d] px-2 text-[#e0e0e0] outline-none" />
            <button aria-label="Fake user" className={`${toolBtn} w-[19px]`}>
              <Shield size={16} strokeWidth={2} className="text-[#999]" />
            </button>
          </div>
          <ListPanel title="Vertex Groups" canAdd />
          <ListPanel title="Shape Keys" />
          {CLOSED_PANELS.map((p) => (
            <PanelHeader key={p} title={p} />
          ))}
        </div>
      </div>
    </section>
  );
}

/* ---------- status bar ---------- */

const MouseIcon = ({ right }) => (
  <svg width="12" height="16" viewBox="0 0 12 16" fill="none" stroke="#b0b0b0" className={right ? '-scale-x-100' : undefined} aria-hidden="true">
    <path d="M5.500 1V7H1V4c0-2 2-3 4.500-3z" fill="#b0b0b0" />
    <path d="M8 1.500c2 .3 3 1.500 3 3V11c0 3-1.500 4.500-5 4.500S1 14 1 11V9.500" />
  </svg>
);

const ShiftGlyph = () => (
  <svg width="9" height="12" viewBox="0 0 9 12" fill="none" stroke="currentColor" aria-hidden="true">
    <path d="M4.500 1L8 5H6v6H3V5H1z" />
  </svg>
);

const TabGlyph = () => (
  <svg width="13" height="12" viewBox="0 0 13 12" fill="none" stroke="currentColor" strokeWidth="1.3" aria-hidden="true">
    <path d="M1.500 1v5M12 3.500H3M5.500 1L3 3.500 5.500 6M11.500 6v5M1 8.500h9M7.500 6L10 8.500 7.500 11" />
  </svg>
);

const HINTS = [
  [['X'], 'X axis'], [['Y'], 'Y axis'], [['Z'], 'Z axis'],
  [['shift', 'X'], 'X plane'], [['shift', 'Y'], 'Y plane'], [['shift', 'Z'], 'Z plane'],
  [['C'], 'Clear Constraints'], [['^'], 'Snap Invert'], [['shift', 'tab'], 'Snap Toggle'],
  [['G'], 'Move'], [['R'], 'Rotate'], [['S'], 'Resize'],
];

const keyContent = (k) => {
  if (k === 'shift') return <ShiftGlyph />;
  if (k === 'tab') return <TabGlyph />;
  return k;
};

const StatusBar = () => (
  <footer className="flex h-[22px] shrink-0 items-center gap-2.5 bg-[#2f2f2f] pt-0.5 pr-[30px] pl-3 whitespace-nowrap text-[#a8a8a8]">
    <span className="flex items-center gap-2.5"><MouseIcon />Confirm</span>
    <span className="ml-[3px] flex items-center gap-2.5"><MouseIcon right />Cancel</span>
    {HINTS.map(([keys, label]) => (
      <span key={label} className="flex items-center gap-[3px]">
        {keys.map((k) => (
          <kbd key={k} className="flex h-[18px] w-[17px] items-center justify-center rounded-[5px] border border-[#8c8c8c] font-[inherit]">
            {keyContent(k)}
          </kbd>
        ))}
        <span className="ml-[5px]">{label}</span>
      </span>
    ))}
    <span className="ml-auto">Circle | Verts:3/168 | Edges:2/336 | Faces:0/168 | Tris:336 | Mem: 26.0 MiB | v2.81.16</span>
  </footer>
);

/* ---------- Windows taskbar ---------- */

const APPS = [
  { name: 'Start', icon: <FaWindows size={17} color="#fff" /> },
  {
    name: 'File Explorer',
    running: true,
    icon: (
      <svg width="23" height="20" viewBox="0 0 23 20" aria-hidden="true">
        <path d="M1 1h8l2 2h11v16H1z" fill="#e9a820" />
        <path d="M1 5h21v14H1z" fill="#fbd968" />
        <path d="M5 19v-7q0-1.500 1.500-1.500h10q1.500 0 1.500 1.500v7h-4v-4H9v4z" fill="#3f93d6" />
      </svg>
    ),
  },
  {
    name: 'Chrome',
    icon: (
      <svg width="23" height="23" viewBox="0 0 24 24" aria-hidden="true">
        <path d="M12 12L2 6a11.500 11.500 0 0 1 20 0z" fill="#e14b3c" />
        <path d="M12 12v-6h10a11.500 11.500 0 0 1-10 17.500l5-8z" fill="#fccd3e" />
        <path d="M12 12l4.500 3.500L12 23.500A11.500 11.500 0 0 1 2 6l5 8z" fill="#36a151" />
        <circle cx="12" cy="12" r="5.5" fill="#fff" />
        <circle cx="12" cy="12" r="4.3" fill="#4a87ee" />
      </svg>
    ),
  },
  {
    name: 'DaVinci Resolve',
    icon: (
      <svg width="24" height="24" viewBox="0 0 24 24" aria-hidden="true">
        <circle cx="12" cy="12" r="11" fill="#192430" stroke="#9b7f76" />
        <path d="M12 12.500c-3-2-4-4-3.500-6a3.500 3.500 0 0 1 7 0c.5 2-.5 4-3.500 6z" fill="#45bde8" />
        <path d="M12 12c0 4-1.500 6.500-4 7a3.500 3.500 0 0 1-3-6c1.500-1.500 4-2 7-1z" fill="#b9dd5b" />
        <path d="M12 12c3-1 5.500-.5 7 1a3.500 3.500 0 0 1-3 6c-2.500-.5-4-3-4-7z" fill="#e2504c" />
      </svg>
    ),
  },
  {
    name: 'Spotify',
    running: true,
    icon: (
      <span className="relative flex rounded-full bg-[radial-gradient(#111_60%,transparent_62%)]">
        <FaSpotify size={23} color="#1ed760" />
      </span>
    ),
  },
  {
    name: 'Git',
    icon: (
      <svg width="24" height="24" viewBox="0 0 24 24" aria-hidden="true">
        <path d="M12 0l5.500 5.500L12 11 6.500 5.500z" fill="#ef6a5d" />
        <path d="M6 6l5.500 6L6 18 0 12z" fill="#74a9f5" />
        <path d="M18 6l6 6-6 6-5.500-6z" fill="#7cc851" />
        <path d="M12 13l5.500 5.500L12 24l-5.500-5.500z" fill="#fbe072" />
        <path d="M9 4l3 4v10M12 9l5 4" stroke="#1d2a30" strokeWidth="2" fill="none" />
        <path d="M12 8h.1M12 18h.1M17 13h.1" stroke="#1d2a30" strokeWidth="4" strokeLinecap="round" />
      </svg>
    ),
  },
  {
    name: 'OBS Studio',
    running: true,
    icon: (
      <span className="rounded-full bg-[#1c1a1d]"><SiObsstudio size={23} color="#cfcfcf" /></span>
    ),
  },
  { name: 'Blender', running: true, active: true, icon: <BlenderColor size={24} /> },
];

const Taskbar = () => (
  <div className="flex h-10 shrink-0 items-center bg-[linear-gradient(90deg,#21363f_0%,#20363f_50%,#1d3043_78%,#1b2645_92%,#1a2344_100%)] pl-px text-white">
    {APPS.map((app) => (
      <button
        key={app.name}
        aria-label={app.name}
        className={clsx('relative flex h-full w-[49px] items-center justify-center', app.active && 'bg-[#4c5d66]')}
      >
        {app.icon}
        {app.running && <span className={clsx('absolute bottom-0 h-0.5 bg-[#76b9ed]', app.active ? 'inset-x-0' : 'inset-x-1')} />}
      </button>
    ))}
    <div className="ml-auto flex h-full items-center">
      <div className="flex items-center gap-2">
        <Ico size={14} box={14}><path d="M1 9l6-5 6 5" strokeWidth="1.4" /></Ico>
        <Ico>
          <rect x="4.5" y="0" width="7" height="12" rx="1" fill="#fff" stroke="none" />
          <path d="M3 10c0 3 10 3 10 0M8 12v3M5 15.500h6" />
        </Ico>
        <Ico size={18} box={16}>
          <path d="M1 6h2l3-3v10L3 10H1zM8.500 6c1 1 1 3 0 4M10.500 4.500c2 2 2 5 0 7M12.500 3c3 3 3 7 0 10" strokeWidth="1" />
        </Ico>
        <Ico size={17} box={16}>
          <path d="M5 3h10.500v8.500H3V7M6 14.500h6M9 11.500v3" />
          <rect x=".6" y="2" width="4" height="4" />
        </Ico>
      </div>
      <div className="ml-2.5 w-12 text-center font-['Open_Sans','Noto_Sans',sans-serif] text-[11px] leading-[19px] whitespace-nowrap">
        <p>10:15 PM</p>
        <p>2/6/2020</p>
      </div>
      <button aria-label="Notifications" className="relative ml-[18px] flex size-5 items-center">
        <Ico size={18} box={18}>
          <path d="M1 1h16v12H9l-4 4v-4H1z" fill="#fff" stroke="none" />
          <path d="M4 4.500h10M4 7h10M4 9.500h7" stroke="#1b2645" />
        </Ico>
        <span className="absolute top-[9px] left-[9px] flex size-[15px] items-center justify-center rounded-full border border-[#8a8f99] bg-[#2a3038] text-[11px] font-bold">1</span>
      </button>
      <span className="mr-1 ml-[18px] h-full w-px bg-[#5f6b80]" />
    </div>
  </div>
);

export default function App() {
  return (
    <div className="flex h-screen flex-col overflow-hidden bg-[#202020] font-['DejaVu_Sans_Condensed','DejaVu_Sans',sans-serif] text-[11px]">
      <TitleBar />
      <TopBar />
      <main className="flex min-h-0 flex-1 gap-[3px] pr-px">
        <div className="flex min-w-0 flex-1 flex-col gap-[3px] pl-px">
          <Viewport />
          <Timeline />
        </div>
        <aside className="flex w-[331px] shrink-0 flex-col gap-1 pb-px">
          <Outliner />
          <Properties />
        </aside>
      </main>
      <StatusBar />
      <Taskbar />
    </div>
  );
}
